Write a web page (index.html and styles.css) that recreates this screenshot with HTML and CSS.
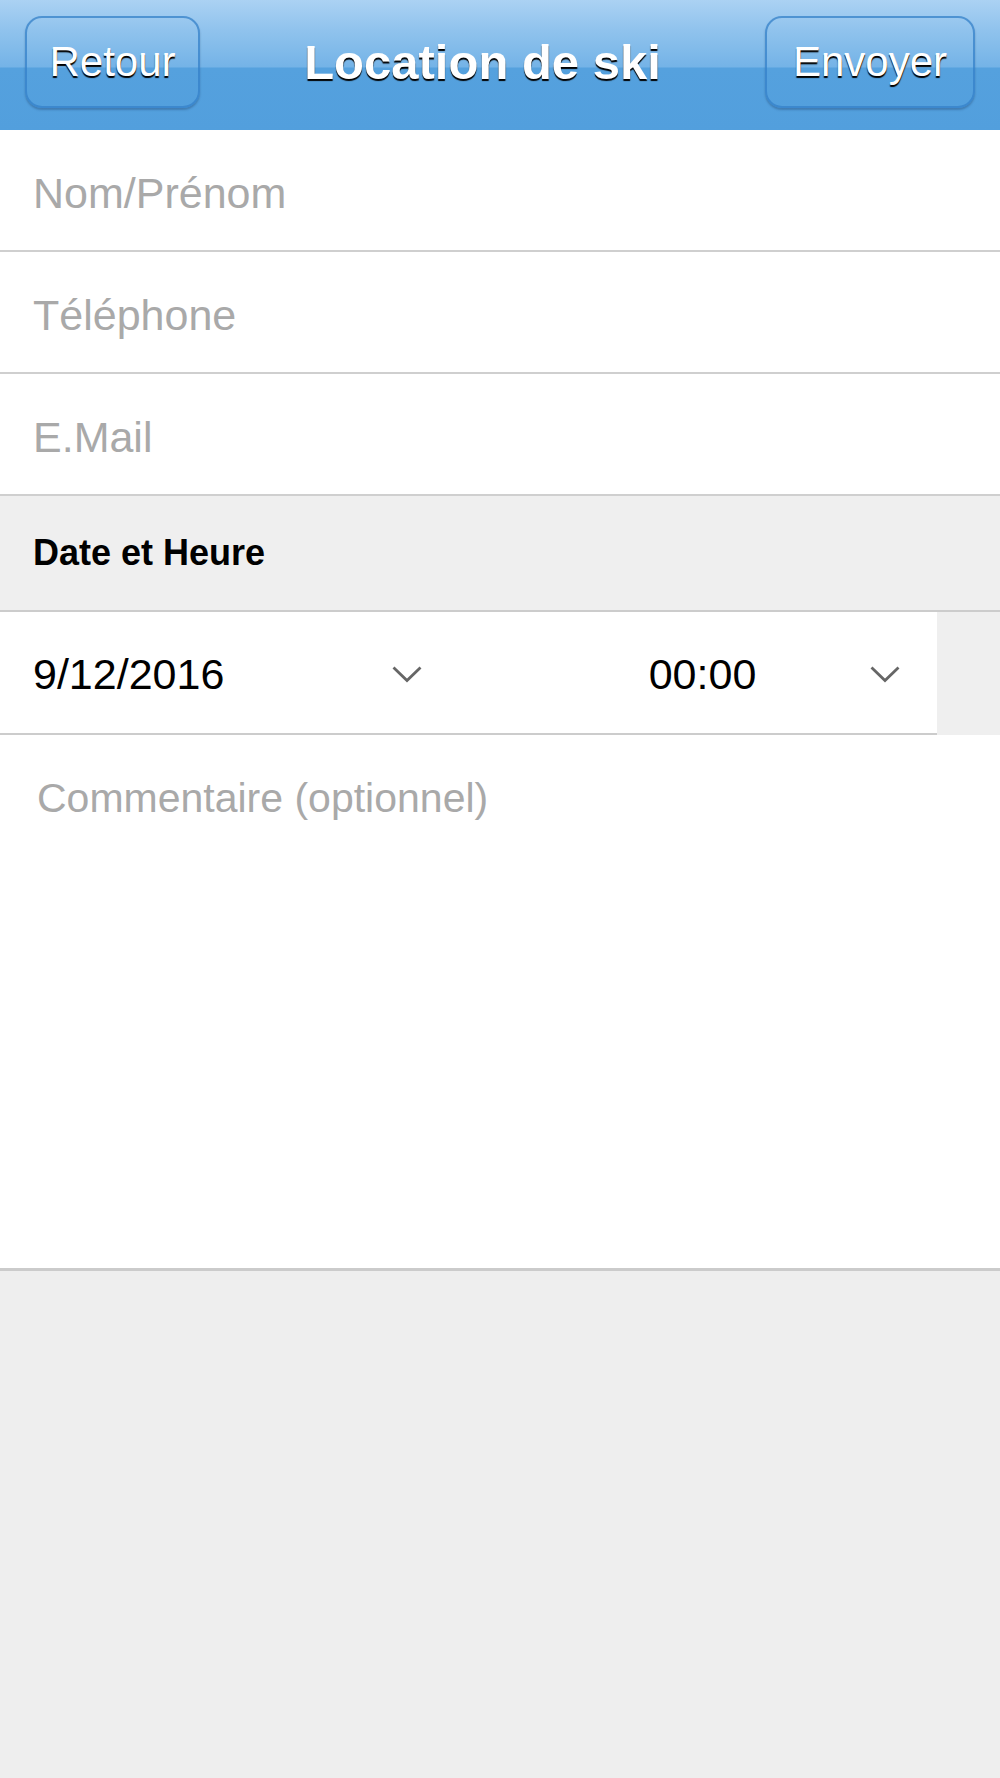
FILE: index.html
```html
<!DOCTYPE html>
<html lang="fr">
<head>
<meta charset="utf-8">
<title>Location de ski</title>
<link rel="stylesheet" href="styles.css">
</head>
<body>
<header class="navbar">
  <button class="nav-btn">Retour</button>
  <h1 class="nav-title">Location de ski</h1>
  <button class="nav-btn">Envoyer</button>
</header>
<main class="form">
  <div class="field"><span class="placeholder">Nom/Prénom</span></div>
  <div class="field"><span class="placeholder">Téléphone</span></div>
  <div class="field"><span class="placeholder">E.Mail</span></div>
  <div class="section">Date et Heure</div>
  <div class="dt-wrap">
    <div class="dt-row">
      <div class="dt-date">
        <span class="value">9/12/2016</span>
        <svg class="chev" width="30" height="17" viewBox="0 0 30 17"><polyline points="1.5,1.5 15,14.5 28.5,1.5" fill="none" stroke="#666666" stroke-width="2.8"/></svg>
      </div>
      <div class="dt-time">
        <span class="value time-val">00:00</span>
        <svg class="chev chev-time" width="30" height="17" viewBox="0 0 30 17"><polyline points="1.5,1.5 15,14.5 28.5,1.5" fill="none" stroke="#666666" stroke-width="2.8"/></svg>
      </div>
    </div>
  </div>
  <div class="comment"><span class="placeholder comment-ph">Commentaire (optionnel)</span></div>
</main>
</body>
</html>
```
FILE: styles.css
```css
html, body {
  margin: 0;
  padding: 0;
}
body {
  width: 1000px;
  min-height: 1778px;
  background: #eeeeee;
  font-family: "Liberation Sans", Arial, sans-serif;
}
.navbar {
  height: 130px;
  box-sizing: border-box;
  padding: 16px 25px 0 25px;
  display: flex;
  align-items: flex-start;
  background: linear-gradient(to bottom, #abd2f3 0px, #90c3ed 30px, #74b3e7 67px, #55a1de 68px, #529fdd 130px);
}
.nav-btn {
  height: 92px;
  box-sizing: border-box;
  border: 2px solid rgba(52, 128, 200, 0.75);
  border-radius: 17px;
  background: transparent;
  box-shadow: 0 2px 2px rgba(30, 60, 100, 0.35);
  color: #ffffff;
  font-family: "Liberation Sans", Arial, sans-serif;
  font-size: 42px;
  text-shadow: 0 2px 1px #000000;
  padding: 0 20px;
  margin: 0;
}
.nav-btn:first-child {
  width: 175px;
}
.nav-btn:last-child {
  width: 210px;
}
.nav-title {
  flex: 1;
  margin: 0;
  height: 92px;
  line-height: 92px;
  text-align: center;
  color: #ffffff;
  font-size: 49px;
  font-weight: bold;
  text-shadow: 0 2px 1px #000000;
}
.form {
  display: flex;
  flex-direction: column;
}
.field {
  height: 122px;
  box-sizing: border-box;
  background: #ffffff;
  border-bottom: 2px solid #cfcfcf;
  display: flex;
  align-items: center;
  padding: 6px 0 0 33px;
}
.placeholder {
  color: #a9a9a9;
  font-size: 43px;
}
.section {
  height: 116px;
  box-sizing: border-box;
  background: #efefef;
  border-bottom: 2px solid #cccccc;
  display: flex;
  align-items: center;
  padding-left: 33px;
  font-size: 36px;
  font-weight: bold;
  color: #000000;
}
.dt-wrap {
  background: #efefef;
}
.dt-row {
  width: 937px;
  height: 123px;
  box-sizing: border-box;
  padding-top: 4px;
  background: #ffffff;
  border-bottom: 2px solid #cccccc;
  display: flex;
}
.dt-date {
  width: 468px;
  box-sizing: border-box;
  padding: 0 46px 0 33px;
  display: flex;
  align-items: center;
  justify-content: space-between;
}
.dt-time {
  flex: 1;
  display: grid;
  grid-template-columns: 1fr auto 1fr;
  align-items: center;
}
.time-val {
  grid-column: 2;
}
.chev-time {
  grid-column: 3;
  justify-self: end;
  margin-right: 37px;
}
.value {
  font-size: 43px;
  color: #000000;
}
.chev {
  display: block;
}
.comment {
  height: 536px;
  background: #ffffff;
  border-bottom: 3px solid #cbcbcb;
  padding: 40px 0 0 37px;
  box-sizing: border-box;
}
.comment-ph {
  font-size: 41px;
}
```
